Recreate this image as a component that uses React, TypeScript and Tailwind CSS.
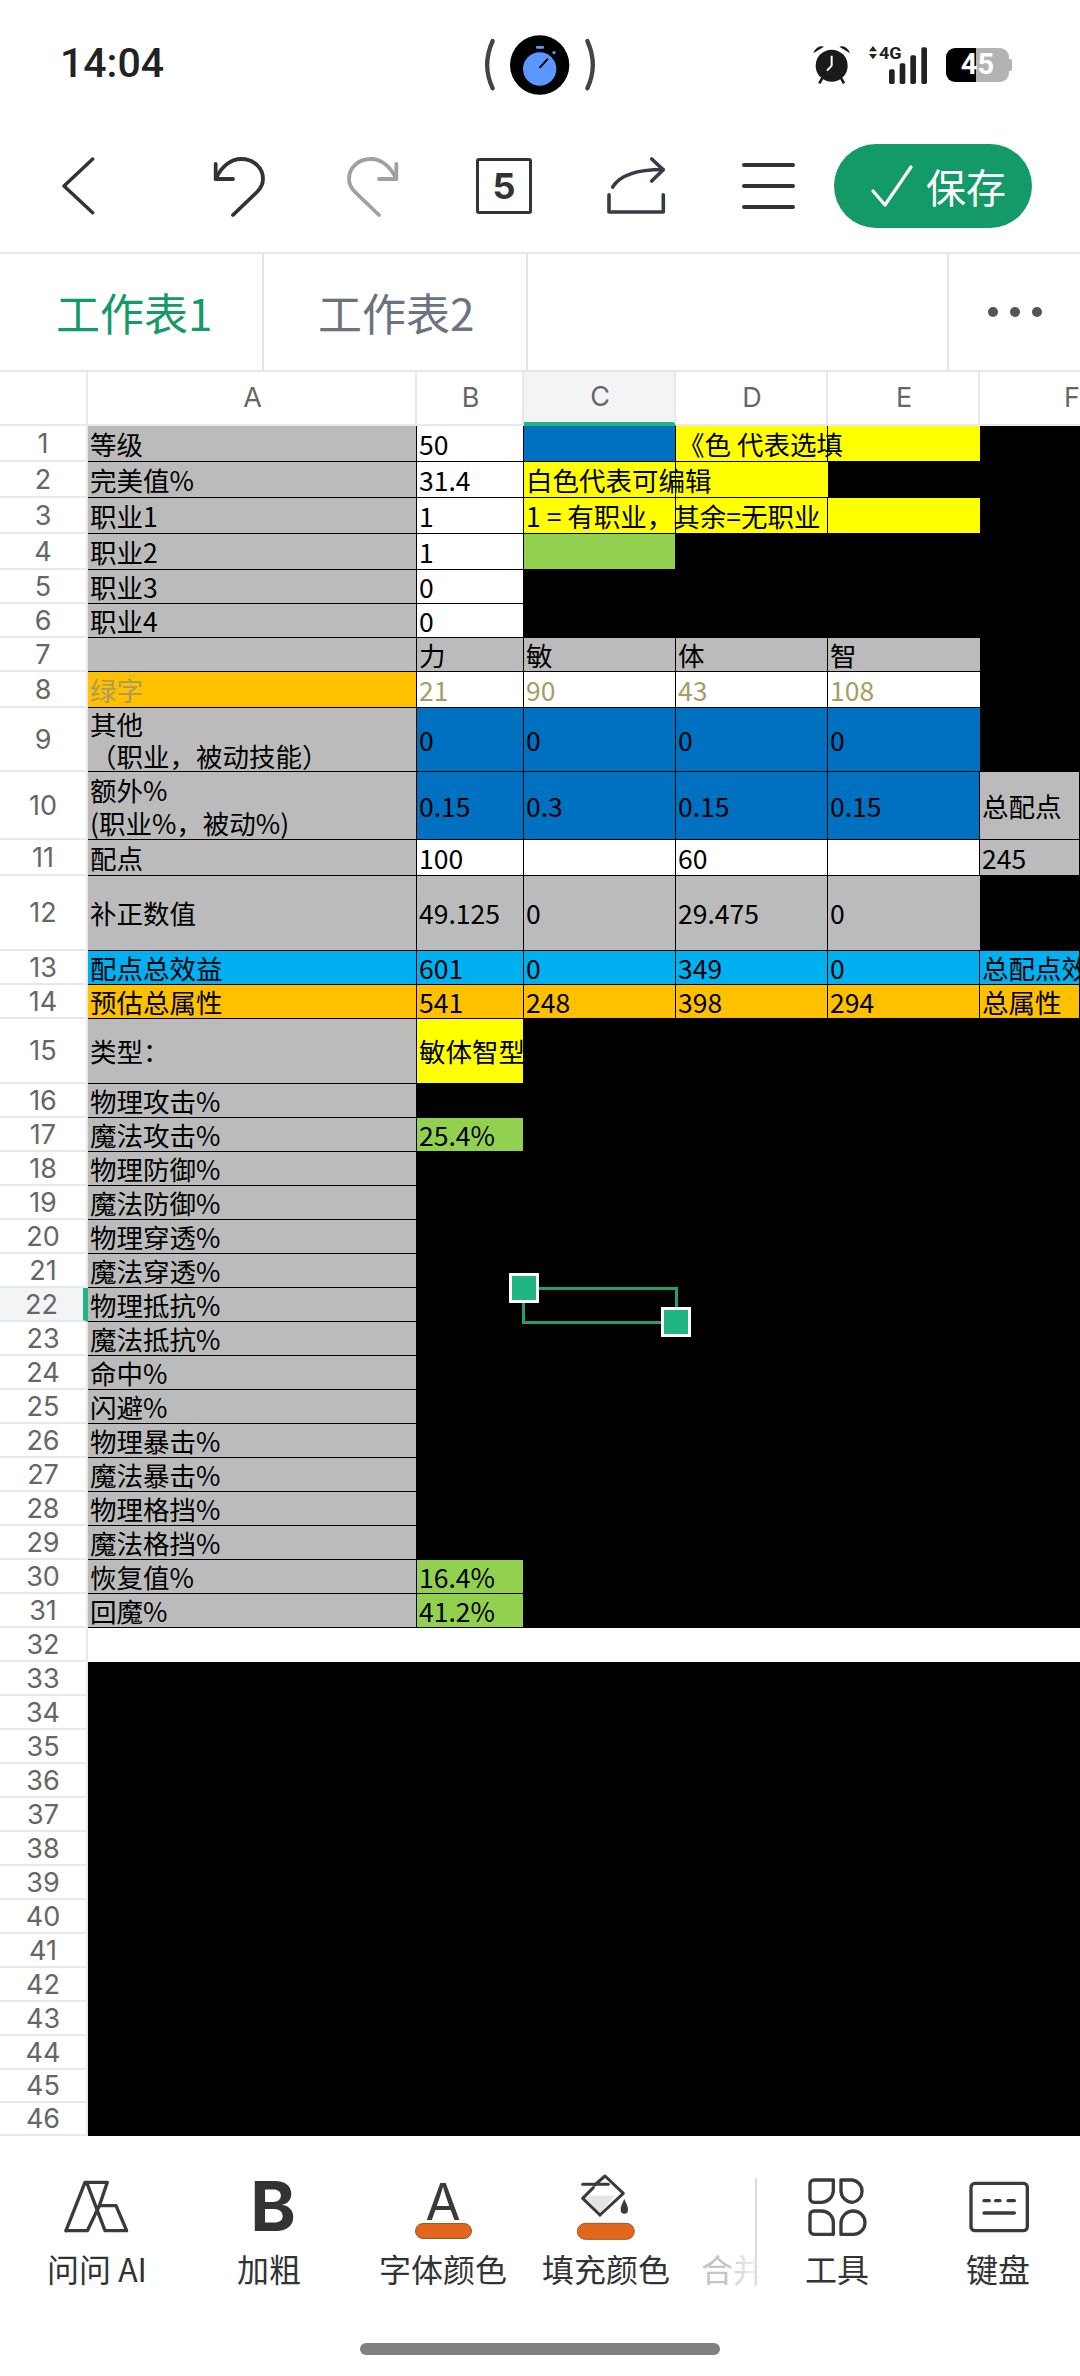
const cjk = "font-['Noto_Sans_CJK_SC',sans-serif]"

const gray = "bg-[#bbbbbb]"
const white = "bg-white"
const blue = "bg-[#0070c0]"
const sky = "bg-[#00b0f0]"
const orange = "bg-[#ffc000]"
const yellow = "bg-[#ffff00]"
const green = "bg-[#92d050]"

const colWidths = ["w-[329px]", "w-[107px]", "w-[152px]", "w-[152px]", "w-[152px]", "w-[100px]"]

type CellDef = { text?: string; bg: string; extra?: string } | null

interface RowDef {
  num: number
  h: string
  cells: CellDef[]
  bg?: string
  active?: boolean
}

const c = (bg: string, text?: string, extra?: string): CellDef => ({ bg, text, extra })
const olive = "text-[#a89c62]"
const over = "relative z-10"
const noLine = "border-r-0"

const rows: RowDef[] = [
  { num: 1, h: "h-[36px]", cells: [c(gray, "等级"), c(white, "50"), c(blue), c(yellow, "《色 代表选填", over), c(yellow, undefined, noLine), null] },
  { num: 2, h: "h-[36px]", cells: [c(gray, "完美值%"), c(white, "31.4"), c(yellow, "白色代表可编辑", over), c(yellow, undefined, noLine), null, null] },
  { num: 3, h: "h-[36px]", cells: [c(gray, "职业1"), c(white, "1"), c(yellow, "1 = 有职业，其余=无职业", over), c(yellow), c(yellow, undefined, noLine), null] },
  { num: 4, h: "h-[36px]", cells: [c(gray, "职业2"), c(white, "1"), c(green, undefined, "border-0"), null, null, null] },
  { num: 5, h: "h-[34px]", cells: [c(gray, "职业3"), c(white, "0"), null, null, null, null] },
  { num: 6, h: "h-[34px]", cells: [c(gray, "职业4"), c(white, "0"), null, null, null, null] },
  { num: 7, h: "h-[34px]", cells: [c(gray), c(gray, "力"), c(gray, "敏"), c(gray, "体"), c(gray, "智", noLine), null] },
  { num: 8, h: "h-[36px]", cells: [c(orange, "绿字", olive), c(white, "21", olive), c(white, "90", olive), c(white, "43", olive), c(white, "108", olive + " " + noLine), null] },
  { num: 9, h: "h-[64px]", cells: [c(gray, "其他\n（职业，被动技能）", "leading-[30px]"), c(blue, "0"), c(blue, "0"), c(blue, "0"), c(blue, "0", noLine), null] },
  { num: 10, h: "h-[68px]", cells: [c(gray, "额外%\n(职业%，被动%)", "leading-[33px]"), c(blue, "0.15"), c(blue, "0.3"), c(blue, "0.15"), c(blue, "0.15"), c(gray, "总配点")] },
  { num: 11, h: "h-[36px]", cells: [c(gray, "配点"), c(white, "100"), c(white), c(white, "60"), c(white), c(gray, "245")] },
  { num: 12, h: "h-[75px]", cells: [c(gray, "补正数值"), c(gray, "49.125"), c(gray, "0"), c(gray, "29.475"), c(gray, "0", noLine), null] },
  { num: 13, h: "h-[34px]", cells: [c(sky, "配点总效益"), c(sky, "601"), c(sky, "0"), c(sky, "349"), c(sky, "0"), c(sky, "总配点效益")] },
  { num: 14, h: "h-[34px]", cells: [c(orange, "预估总属性"), c(orange, "541"), c(orange, "248"), c(orange, "398"), c(orange, "294"), c(orange, "总属性")] },
  { num: 15, h: "h-[65px]", cells: [c(gray, "类型："), c(yellow, "敏体智型", "border-0"), null, null, null, null] },
  ...["物理攻击%", "魔法攻击%", "物理防御%", "魔法防御%", "物理穿透%", "魔法穿透%", "物理抵抗%", "魔法抵抗%", "命中%", "闪避%", "物理暴击%", "魔法暴击%", "物理格挡%", "魔法格挡%", "恢复值%", "回魔%"].map((label, i): RowDef => {
    const num = i + 16
    let b: CellDef = null
    if (num === 17) b = c(green, "25.4%", "border-0")
    if (num === 30) b = c(green, "16.4%", "border-0")
    if (num === 31) b = c(green, "41.2%", "border-0")
    return { num, h: "h-[34px]", cells: [c(gray, label), b, null, null, null, null], active: num === 22 }
  }),
  { num: 32, h: "h-[34px]", cells: [], bg: "bg-white" },
  ...Array.from({ length: 14 }, (_, i): RowDef => ({
    num: i + 33,
    h: i + 33 >= 45 ? "h-[33px]" : "h-[34px]",
    cells: [],
  })),
]

function Cell({ def, width }: { def: CellDef; width: string }) {
  if (!def) return <div className={`${width} shrink-0`} />
  return (
    <div
      className={`${width} ${def.bg} shrink-0 flex flex-col justify-center pl-[2px] border-r border-b border-black text-[26.5px] leading-[32px] whitespace-pre ${def.extra ?? ""}`}
    >
      {def.text}
    </div>
  )
}

function SheetRow({ row }: { row: RowDef }) {
  return (
    <div className={`flex ${row.h} ${row.bg ?? "bg-black"}`}>
      <div
        className={`w-[88px] shrink-0 flex items-center justify-center pt-[2px] font-['Inter',sans-serif] text-[27px] text-[#666666] border-b-2 border-b-[#e8e8e8] ${
          row.active ? "bg-[#f3f4f6] border-r-[5px] border-r-[#20b583]" : "bg-white border-r-2 border-r-[#e8e8e8]"
        }`}
      >
        {row.num}
      </div>
      {row.cells.map((def, i) => (
        <Cell key={i} def={def} width={colWidths[i]} />
      ))}
    </div>
  )
}

function ColumnHeader() {
  const head = "shrink-0 flex items-center justify-center pl-[2px] border-r-2 border-[#e8e8e8] font-['Inter',sans-serif] text-[27px] text-[#666666]"
  return (
    <div className="flex h-[54px] bg-white">
      <div className="w-[88px] shrink-0 border-r-2 border-b-2 border-[#e8e8e8]" />
      <div className={`${head} w-[329px] border-b-2`}>A</div>
      <div className={`${head} w-[107px] border-b-2`}>B</div>
      <div className={`${head} w-[152px] bg-[#f3f4f6] border-b-4 border-b-[#20b583]`}>C</div>
      <div className={`${head} w-[152px] border-b-2`}>D</div>
      <div className={`${head} w-[152px] border-b-2`}>E</div>
      <div className="flex-1 flex items-center pl-[84px] border-b-2 border-[#e8e8e8] font-['Inter',sans-serif] text-[27px] text-[#666666]">F</div>
    </div>
  )
}

function StatusBar() {
  return (
    <div className="flex h-[130px] items-center">
      <span className="ml-[60px] w-[110px] pb-[2px] font-['Roboto',sans-serif] font-medium text-[41px] text-[#222222]">14:04</span>
      <svg className="ml-[300px]" width="140" height="80" viewBox="0 0 420 240" fill="none">
        <path d="M68 48 Q35 120 68 190" stroke="#444444" strokeWidth="13" strokeLinecap="round" />
        <path d="M352 48 Q385 120 352 190" stroke="#444444" strokeWidth="13" strokeLinecap="round" />
        <circle cx="209" cy="120" r="89" fill="#000000" />
        <circle cx="209" cy="132" r="50" fill="#5c97ff" />
        <rect x="198" y="63" width="24" height="8" rx="3" fill="#5c97ff" />
        <circle cx="252" cy="83" r="5" fill="#5c97ff" />
        <path d="M210 127 L232 103" stroke="#000000" strokeWidth="6" strokeLinecap="round" />
      </svg>
      <svg className="ml-[200px]" width="43" height="42" viewBox="90 70 129 126" fill="none">
        <circle cx="155" cy="135" r="48" fill="#1a1a1a" />
        <path d="M100 98 A26 26 0 0 1 132 78 Z" fill="#1a1a1a" />
        <path d="M210 98 A26 26 0 0 0 178 78 Z" fill="#1a1a1a" />
        <path d="M128 170 L118 188 M182 170 L192 188" stroke="#1a1a1a" strokeWidth="8" />
        <path d="M155 105 V135 L141 150" stroke="#ffffff" strokeWidth="6" fill="none" />
      </svg>
      <svg className="ml-[14px]" width="62" height="42" viewBox="0 0 186 126" fill="none">
        <path d="M6 22 L18 6 L30 22 Z M6 30 L30 30 L18 46 Z" fill="#222222" />
        <text x="36" y="46" fontFamily="Roboto" fontWeight="700" fontSize="50" fill="#222222" textLength="68" lengthAdjust="spacingAndGlyphs">4G</text>
        <rect x="66" y="76" width="17" height="44" rx="5" fill="#222222" />
        <rect x="98" y="58" width="17" height="62" rx="5" fill="#222222" />
        <rect x="130" y="34" width="17" height="86" rx="5" fill="#222222" />
        <rect x="163" y="10" width="17" height="110" rx="5" fill="#222222" />
      </svg>
      <div className="ml-[17px] flex items-center">
        <div className="relative flex h-[34px] w-[63px] overflow-hidden rounded-[9px]">
          <div className="w-[30px] bg-black" />
          <div className="flex-1 bg-[#b3b3b3]" />
          <span className="absolute inset-0 flex items-center justify-center font-['Roboto',sans-serif] font-bold text-[29px] text-white">45</span>
        </div>
        <div className="h-[12px] w-[3px] rounded-r-[2px] bg-[#b3b3b3]" />
      </div>
    </div>
  )
}

function Toolbar() {
  return (
    <div className="flex h-[122px] items-center pb-[10px]">
      <svg className="ml-[60px]" width="36" height="60" viewBox="60 156 36 60" fill="none" stroke="#333333" strokeWidth="3.5" strokeLinecap="round" strokeLinejoin="round">
        <path d="M92.7 159 L64 186 L92.7 212.7" />
      </svg>
      <svg className="ml-[114px]" width="60" height="70" viewBox="0 0 60 70" fill="none" stroke="#333333" strokeWidth="3.8" strokeLinecap="round" strokeLinejoin="round">
        <path d="M5.7 13 V28 H23" />
        <path d="M5.7 28 C12 14 22 8 31 8 C44 8 53 17 53 28 C53 34 50 38 47 41 L23 64" />
      </svg>
      <svg className="ml-[73px]" width="60" height="70" viewBox="0 0 60 70" fill="none" stroke="#a0a0a0" strokeWidth="3.8" strokeLinecap="round" strokeLinejoin="round">
        <path d="M53.3 13 V28 H36" />
        <path d="M53.3 28 C47 14 37 8 28 8 C15 8 6 17 6 28 C6 34 9 38 12 41 L36 64" />
      </svg>
      <div className="ml-[73px] flex h-[56px] w-[56px] items-center justify-center rounded-[3px] border-[3.5px] border-[#333333] font-['Inter',sans-serif] font-bold text-[36px] text-[#333333]">5</div>
      <svg className="ml-[74px]" width="60" height="60" viewBox="606 153 60 60" fill="none" stroke="#363c47" strokeWidth="3.6" strokeLinecap="round" strokeLinejoin="round">
        <path d="M612.7 184 C620 172 638 166.5 663 166.5" />
        <path d="M651.7 156 L663.3 166.7 L651.7 178" />
        <path d="M609 191.7 V209 H663.3 V191.7" />
      </svg>
      <div className="ml-[76px] flex w-[53px] flex-col gap-[17px]">
        <div className="h-[4px] rounded-full bg-[#333333]" />
        <div className="h-[4px] rounded-full bg-[#333333]" />
        <div className="h-[4px] rounded-full bg-[#333333]" />
      </div>
      <div className="ml-[39px] flex h-[84px] w-[198px] items-center gap-[13px] rounded-full bg-[#149a68] pl-[37px]">
        <svg width="42" height="42" viewBox="0 0 42 42" fill="none" stroke="#ffffff" strokeWidth="3.2" strokeLinecap="round" strokeLinejoin="round">
          <path d="M2 26 L14 40 L40 2" />
        </svg>
        <span className={`${cjk} text-[40px] leading-none text-white`}>保存</span>
      </div>
    </div>
  )
}

function Tabs() {
  return (
    <div className="flex h-[120px] border-t-2 border-b-2 border-[#e5e5e5] bg-white">
      <div className={`${cjk} flex w-[264px] items-center pl-[56px] border-r-2 border-[#e5e5e5] text-[44px] text-[#149a68]`}>工作表1</div>
      <div className={`${cjk} flex w-[264px] items-center pl-[54px] border-r-2 border-[#e5e5e5] text-[44px] text-[#6b7280]`}>工作表2</div>
      <div className="w-[419px]" />
      <div className="flex flex-1 items-center justify-center gap-[12px] border-l-2 border-[#e5e5e5]">
        <div className="h-[10px] w-[10px] rounded-full bg-[#555555]" />
        <div className="h-[10px] w-[10px] rounded-full bg-[#555555]" />
        <div className="h-[10px] w-[10px] rounded-full bg-[#555555]" />
      </div>
    </div>
  )
}

function Selection() {
  return (
    <>
      <div className="absolute left-[522px] top-[915px] h-[37px] w-[156px] border-[3px] border-[#1f9f72]" />
      <div className="absolute left-[509px] top-[901px] h-[30px] w-[30px] border-[3px] border-white bg-[#20b583]" />
      <div className="absolute left-[661px] top-[935px] h-[30px] w-[30px] border-[3px] border-white bg-[#20b583]" />
    </>
  )
}

function OrangeBar() {
  return <div className="h-[16px] w-[57px] shrink-0 rounded-full border border-[#9a5a2c] bg-[#e2661b]" />
}

function BottomItem({ width, label, children }: { width: string; label: string; children: React.ReactNode }) {
  return (
    <div className={`${width} flex shrink-0 flex-col items-center`}>
      <div className="flex h-[80px] w-[90px] flex-col items-center">{children}</div>
      <span className={`${cjk} h-[48px] whitespace-nowrap text-[32px] leading-[46px] text-[#333333]`}>{label}</span>
    </div>
  )
}

function BottomBar() {
  const icon = { width: 90, height: 80, fill: "none", stroke: "#3a3a3a", strokeWidth: 10, strokeLinecap: "round" as const, strokeLinejoin: "round" as const }
  return (
    <div className="flex h-[240px] flex-col items-center bg-white pt-[29px]">
      <div className="flex w-full">
        <BottomItem width="w-[194px]" label="问问 AI">
          <svg {...icon} viewBox="6 0 270 240">
            <path d="M48 197 L105 52 H172 L148 122 H198 L230 197 H165 L110 52" />
            <path d="M48 197 H112 L148 122" />
          </svg>
        </BottomItem>
        <BottomItem width="w-[150px]" label="加粗">
          <span className="mt-[9px] translate-x-[4px] font-['Inter',sans-serif] font-bold text-[69px] leading-[64px] text-[#333333]">B</span>
        </BottomItem>
        <BottomItem width="w-[198px]" label="字体颜色">
          <span className="h-[58px] font-['Inter',sans-serif] text-[51px] leading-[74px] text-[#3a3a3a]">A</span>
          <OrangeBar />
        </BottomItem>
        <BottomItem width="w-[128px]" label="填充颜色">
          <svg {...icon} viewBox="3 0 270 240" strokeWidth={9}>
            <path d="M85 92 H165 L120 143 L75 100 Z" fill="#e4e4e4" stroke="none" />
            <path d="M120 150 L68 100 L100 68" />
            <path d="M104 60 L135 33 L190 85 L120 150" />
            <path d="M68 58 H145" />
            <path d="M193 102 C186 118 182 124 182 134 A11 12 0 0 0 204 134 C204 124 200 118 193 102 Z" fill="#3a3a3a" stroke="none" />
            <rect x="52" y="175" width="171" height="48" rx="24" fill="#e2661b" stroke="#9a5a2c" strokeWidth="3" />
          </svg>
        </BottomItem>
        <div className="relative h-[128px] w-[85px] shrink-0 overflow-hidden pl-[31px] pt-[80px]">
          <span className={`${cjk} block whitespace-nowrap text-[32px] leading-[46px] text-[#c4c4c4]`}>合并</span>
          <div className="absolute bottom-0 right-0 top-0 w-[30px] bg-gradient-to-r from-white/0 to-white/80" />
        </div>
        <div className="mt-[13px] h-[108px] w-[2px] shrink-0 bg-[#dddddd]" />
        <BottomItem width="w-[160px]" label="工具">
          <svg {...icon} viewBox="696 0 270 240">
            <path d="M762 45 H820 V75 A37 37 0 0 1 783 112 H762 A12 12 0 0 1 750 100 V57 A12 12 0 0 1 762 45 Z" />
            <path d="M843 45 H878 A34 34 0 0 1 878 112 A35 35 0 0 1 843 77 Z" />
            <path d="M762 138 H785 A35 35 0 0 1 820 173 V208 H762 A12 12 0 0 1 750 196 V150 A12 12 0 0 1 762 138 Z" />
            <path d="M843 208 V175 A37 37 0 0 1 880 138 A35 35 0 0 1 880 208 Z" />
          </svg>
        </BottomItem>
        <BottomItem width="w-[162px]" label="键盘">
          <svg {...icon} viewBox="1179 0 270 240">
            <rect x="1233" y="55" width="169" height="142" rx="12" />
            <path d="M1272 107 H1288 M1307 107 H1320 M1344 107 H1363 M1272 144 H1363" />
          </svg>
        </BottomItem>
      </div>
      <div className="mt-[50px] h-[12px] w-[360px] rounded-full bg-[#808080]" />
    </div>
  )
}

export default function App() {
  return (
    <div className={`${cjk} h-[2376px] w-[1080px] overflow-hidden bg-white`}>
      <StatusBar />
      <Toolbar />
      <Tabs />
      <div className="relative overflow-hidden">
        <ColumnHeader />
        {rows.map((row) => (
          <SheetRow key={row.num} row={row} />
        ))}
        <Selection />
      </div>
      <BottomBar />
    </div>
  )
}
